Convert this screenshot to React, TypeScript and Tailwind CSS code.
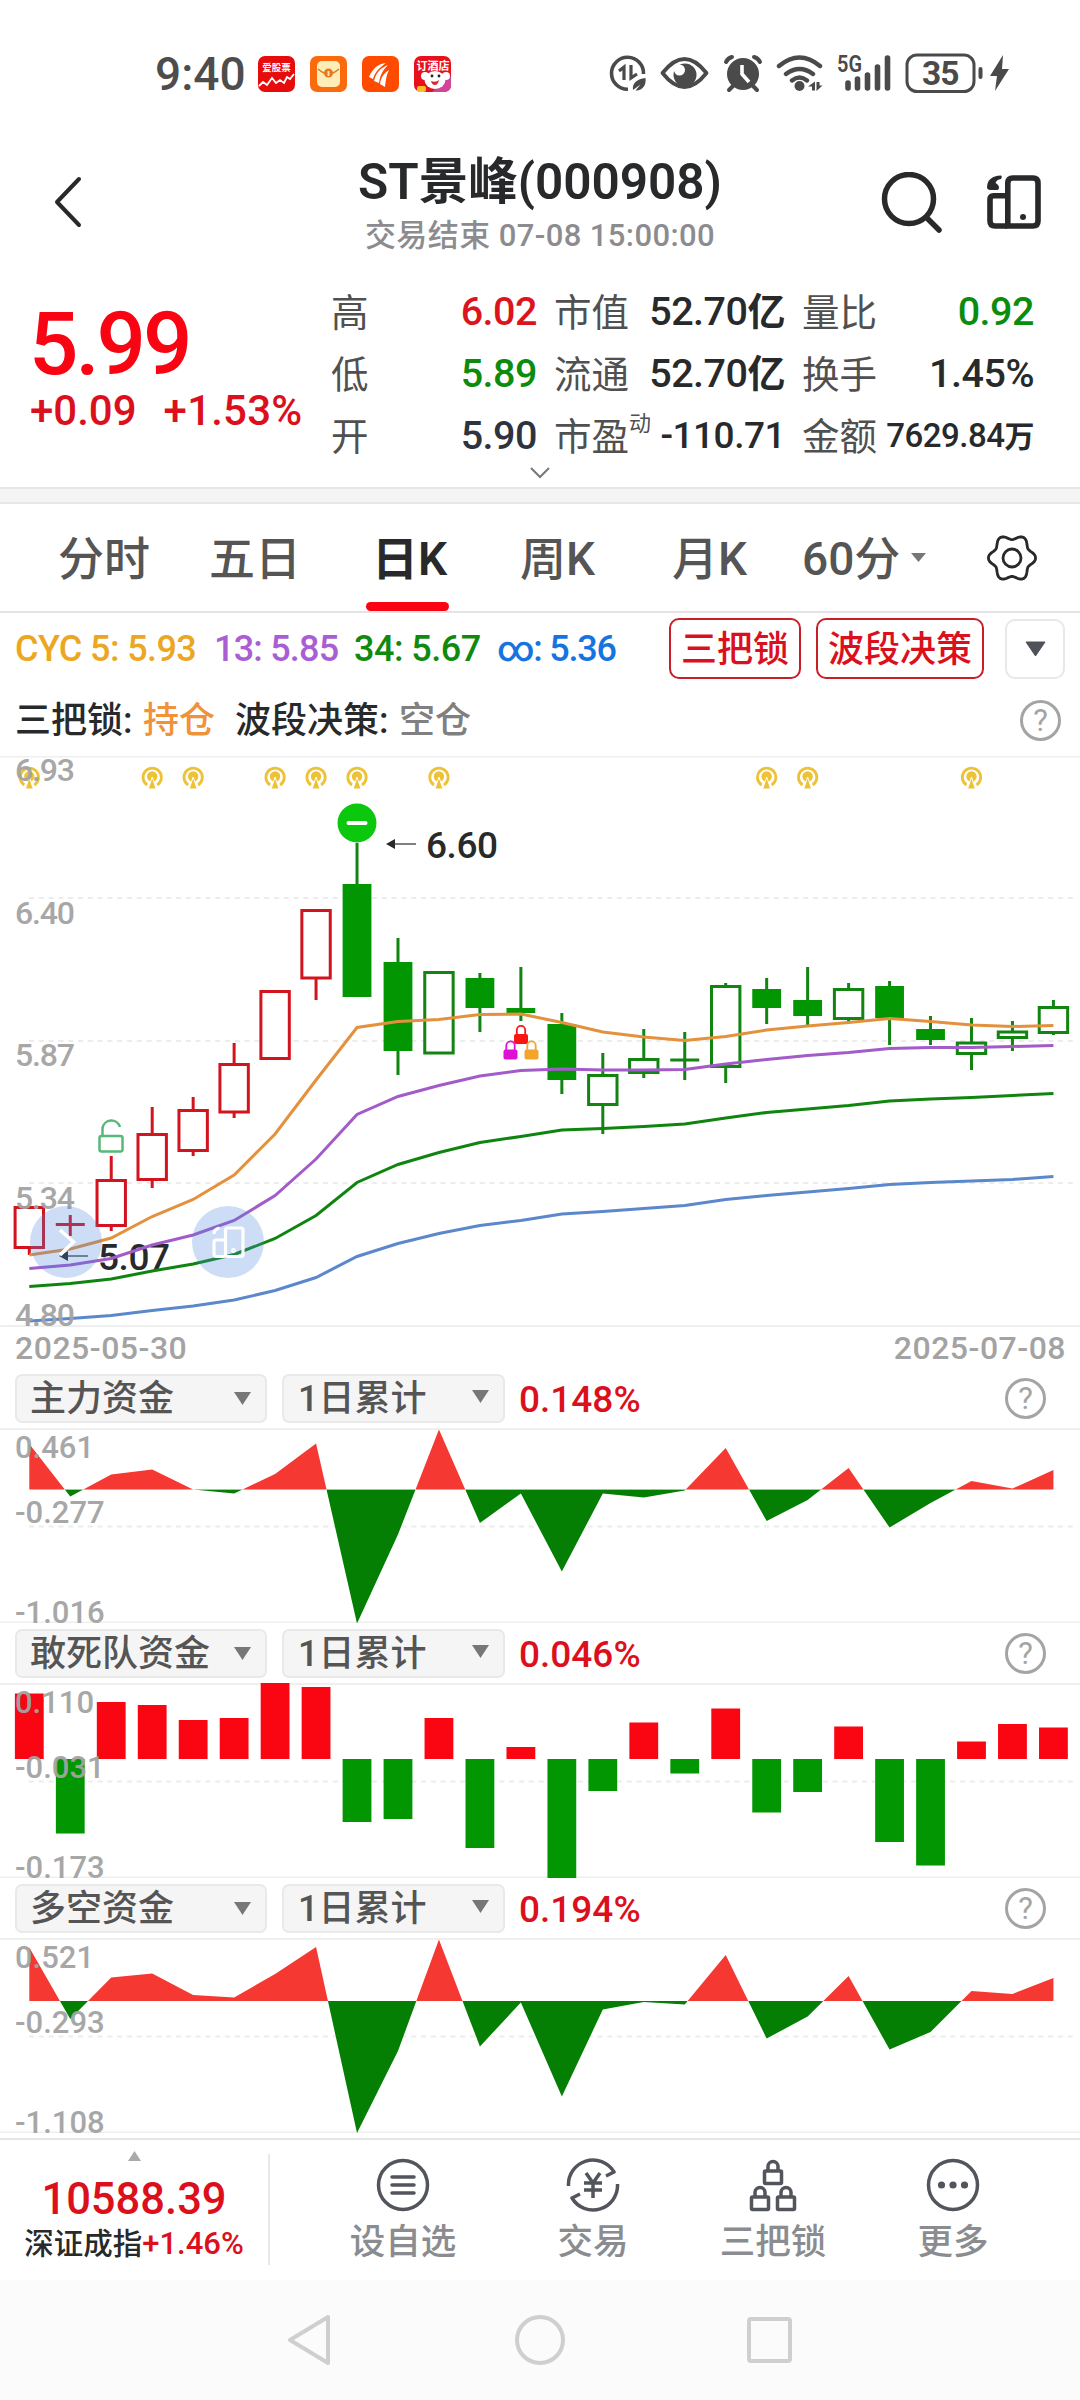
import type { ReactNode } from "react";

const STEP = 40.965;
const X0 = 29.3;
const px = (i: number) => X0 + i * STEP;

type Candle = { kind: "up" | "hollow" | "solid"; body: [number, number]; wick: [number, number] };

// y values inside the k-line canvas (570px high)
const TOP = 756;
const candles: Candle[] = [
  { kind: "up", body: [1206, 1249], wick: [1206, 1255] },
  { kind: "up", body: [1224.5, 1224.5], wick: [1215, 1236] },
  { kind: "up", body: [1179, 1227], wick: [1156, 1231] },
  { kind: "up", body: [1133, 1181], wick: [1107, 1188] },
  { kind: "up", body: [1109, 1152], wick: [1097, 1156] },
  { kind: "up", body: [1063, 1113.5], wick: [1043, 1118] },
  { kind: "up", body: [990, 1060], wick: [990, 1060] },
  { kind: "up", body: [909, 979.5], wick: [909, 1000] },
  { kind: "solid", body: [884, 997], wick: [843, 997] },
  { kind: "solid", body: [962, 1051], wick: [938, 1075] },
  { kind: "hollow", body: [971, 1054.5], wick: [971, 1054] },
  { kind: "solid", body: [978, 1008], wick: [973, 1032] },
  { kind: "solid", body: [1008, 1013], wick: [967, 1021] },
  { kind: "solid", body: [1024, 1080], wick: [1013, 1094] },
  { kind: "hollow", body: [1074, 1106], wick: [1053, 1134] },
  { kind: "hollow", body: [1058, 1074], wick: [1029, 1078] },
  { kind: "hollow", body: [1060, 1060], wick: [1032, 1080] },
  { kind: "hollow", body: [985, 1068], wick: [983, 1083] },
  { kind: "solid", body: [989, 1008], wick: [978, 1024] },
  { kind: "solid", body: [1000, 1016], wick: [967, 1026] },
  { kind: "hollow", body: [988, 1020], wick: [983, 1023] },
  { kind: "solid", body: [986, 1018], wick: [981, 1045] },
  { kind: "solid", body: [1029, 1040], wick: [1016, 1045] },
  { kind: "hollow", body: [1041.5, 1055], wick: [1018, 1070] },
  { kind: "hollow", body: [1030.5, 1039], wick: [1021, 1051] },
  { kind: "hollow", body: [1006, 1034], wick: [1000, 1035] },
];

const averages = [
  { color: "#5b87cb", ys: [1321, 1318.5, 1315.5, 1310.5, 1306, 1300, 1290.5, 1277.5, 1256.5, 1243.5, 1233.5, 1225.5, 1220.5, 1214, 1211.5, 1208.5, 1205.5, 1199.5, 1195.5, 1192, 1188.5, 1184.5, 1182.5, 1181, 1179.5, 1176.5] },
  { color: "#0f850f", ys: [1286.5, 1283.5, 1279, 1271, 1264, 1254.5, 1238.5, 1215.5, 1182.5, 1164.5, 1152.5, 1142.5, 1136.5, 1130, 1128.5, 1126.5, 1124, 1118, 1112.5, 1109, 1105.5, 1101, 1099, 1097.5, 1095.5, 1093.5] },
  { color: "#a25bc9", ys: [1268.5, 1265, 1258.5, 1245, 1235, 1220.5, 1195.5, 1159, 1114.5, 1096.5, 1085.5, 1076, 1070.5, 1069, 1070, 1070, 1069.5, 1064, 1059.5, 1055.5, 1052.5, 1048.5, 1047.5, 1047.5, 1046.5, 1045.5] },
  { color: "#e3913c", ys: [1255, 1249, 1238, 1216.5, 1199.5, 1175, 1134, 1080, 1027.5, 1021.5, 1019.5, 1014.5, 1014, 1022.5, 1032, 1037, 1040.5, 1036.5, 1030, 1026, 1022.5, 1018.5, 1021.5, 1025, 1026.5, 1025.5] },
];

const signals = [0, 3, 4, 6, 7, 8, 10, 18, 19, 23];

const mainFund = [-45.5, 7, -15, -20, 0, 4, -15.5, -46, 134, 45, -60, 33.5, 4, 82, 4, 8, 1, -41.5, 31.5, 10.5, -21.5, 38, 13.5, -8.5, -1, -19.5];
const hotFund = [-65.5, 74.5, -57, -54, -39, -41, -76, -72, 63, 60, -41, 89, -12, 119, 32, -36.5, 14.5, -50.5, 53.5, 33, -32.5, 83, 106.5, -17.5, -35, -31.5];
const netFund = [-53.5, 18, -23.5, -27.5, -6, -3.5, -27, -54, 132, 50, -61.5, 45.5, 1.5, 95.5, 8.5, 1, 3.5, -46, 37.5, 15.5, -25, 48.5, 31, -10, -7, -23];

const gear = Array.from({ length: 72 }, (_, i) => {
  const a = (i * Math.PI) / 36;
  const r = 21 + 2.6 * Math.cos(6 * a);
  return `${i ? "L" : "M"}${(25 + r * Math.cos(a)).toFixed(1)} ${(25 + r * Math.sin(a)).toFixed(1)}`;
}).join("") + "Z";

function StatusBar() {
  return (
    <div className="flex h-[110px] items-center pt-[37px] pl-[155px]">
      <span className="w-[103px] text-[46px] leading-[38px] text-[#4d4d4d]">9:40</span>
      <svg className="h-[38px] w-[200px]" viewBox="0 0 200 38">
        <rect y="1" width="37" height="36" rx="7" fill="#e60c0c" />
        <text x="18.5" y="16" fontSize="9.5" fontWeight="700" textAnchor="middle" fill="#fff">爱股票</text>
        <path d="M1 31 5 27l4 3 5-7 4 5 4-3 4 3 3-6 3 2 4-5" fill="none" stroke="#fff" strokeWidth="1.8" />
        <rect x="52" y="1" width="37" height="36" rx="7" fill="#fb6a0c" />
        <rect x="59" y="6" width="23" height="26" rx="5" fill="#ffedb8" />
        <path d="M60 14q6 5 10.500 5t10.500-5" fill="none" stroke="#e0781c" strokeWidth="1.600" />
        <circle cx="70.500" cy="18" r="4.500" fill="#e8791b" />
        <path d="M70.500 16v5" stroke="#ffedb8" strokeWidth="1.800" />
        <rect x="104" y="1" width="37" height="36" rx="7" fill="#fe4b00" />
        <path d="M111 22c4-9 9-13 17-14-7 5-11 9-13 16zM116 26c2-8 6-13 14-16-5 5-8 10-9 18zM122 29c1-7 4-11 9-14-3 6-3 10-4 17z" fill="#fff" />
        <rect x="156" y="1" width="37" height="36" rx="7" fill="#e8101c" />
        <path d="M174 37l19-16v9q0 7-7 7z" fill="#d0449a" />
        <text x="175" y="15" fontSize="11" fontWeight="700" textAnchor="middle" fill="#fff">订酒店</text>
        <ellipse cx="177" cy="25" rx="10.500" ry="9" fill="#fff" />
        <circle cx="167" cy="21" r="4" fill="#fff" />
        <circle cx="188" cy="21" r="4" fill="#fff" />
        <circle cx="174" cy="21" r="1.400" fill="#222" />
        <circle cx="181" cy="21" r="1.400" fill="#222" />
        <path d="M173 26q5 2 8-1-1 5-4 5t-4-4z" fill="#e02530" />
        <rect x="159" y="31" width="9" height="6" rx="2" fill="#fbbd23" />
      </svg>
      <svg className="ml-[146px] h-[44px] w-[420px]" viewBox="604 52 420 44" fill="none" stroke="#4a4a4a">
        {/* data saver */}
        <path d="M628 89.300A16 16 0 1 1 643.500 74" strokeWidth="3.600" />
        <path d="M619 71l5-4v13M631 65v13l6-4" strokeWidth="3.200" />
        <path d="M633 90c-1-7 4-11 12.500-12 1 7-3 13-10 12.500l5-6z" fill="#4a4a4a" stroke="none" />
        {/* eye */}
        <path d="M662.500 73q11-14 22-14t22 14q-11 14-22 14t-22-14z" strokeWidth="3.800" strokeLinejoin="round" />
        <circle cx="685" cy="75" r="11.500" fill="#4a4a4a" stroke="none" />
        <circle cx="679.500" cy="70" r="5.500" fill="#fff" stroke="none" />
        {/* alarm */}
        <circle cx="743" cy="74" r="16" fill="#4a4a4a" stroke="none" />
        <path d="M742 65v9l7 8" stroke="#fff" strokeWidth="3.600" />
        <path d="M726 62q2-4 6-5M760 62q-2-4-6-5M733 86l-4 4M753 86l4 4" strokeWidth="4" strokeLinecap="round" />
        {/* wifi */}
        <path d="M779 66q20.500-17 41 0M786 74q13.500-10 27 0M792 80.500q7.500-6 15 0" strokeWidth="4.400" strokeLinecap="round" />
        <circle cx="799.500" cy="86" r="5" fill="#4a4a4a" stroke="none" />
        <path d="M808 86.500l7-5v9h-3v-4zM816.500 82v9l6-5.500h-3V82z" fill="#4a4a4a" stroke="none" />
        {/* signal */}
        <path d="M848 88v-5M857.500 88v-9M867.500 88v-13M877.500 88v-21M887.500 88v-30" strokeWidth="5.600" strokeLinecap="round" />
        <text x="837" y="72" fontSize="23" fontWeight="600" fill="#4a4a4a" stroke="none" textLength="25" lengthAdjust="spacingAndGlyphs">5G</text>
        {/* battery */}
        <rect x="907" y="55" width="67" height="36.500" rx="10" strokeWidth="3" />
        <path d="M980.500 69v8" strokeWidth="4" strokeLinecap="round" />
        <text x="922" y="85" fontSize="33.500" fontWeight="700" fill="#4a4a4a" stroke="none" textLength="37.500">35</text>
        <path d="M1003 55l-13 21h7l-2 15 14-22h-7z" fill="#4a4a4a" stroke="none" />
      </svg>
    </div>
  );
}

function DeviceIcon({ className }: { className: string }) {
  return (
    <svg className={className} viewBox="0 0 54 54" fill="none" stroke="currentColor" strokeWidth="5.600">
      <path d="M20.800 8q0-5 5-5h20.200q5 0 5 5v38q0 5-5 5H20.800z" />
      <path d="M20 20.800H6.500q-3.500 0-3.500 4V46q0 5 5 5H20" />
      <path d="M14 .5Q0 1 0 13q1 2 3 2h7q2 0 2-2.500T8.500 8q1-3.500 5.500-4 1.500-3 0-3.500z" fill="currentColor" stroke="none" />
      <circle cx="36" cy="42" r="3" fill="currentColor" stroke="none" />
    </svg>
  );
}

function Header() {
  return (
    <header className="flex h-[150px] items-start pl-[54px]">
      <svg className="mt-[66px] h-[52px] w-[28px]" viewBox="0 0 28 52" fill="none" stroke="#28292b" strokeWidth="4" strokeLinecap="round" strokeLinejoin="round">
        <path d="M25 3 3 26l22 23" />
      </svg>
      <div className="ml-[136px] flex w-[644px] flex-col items-center pt-[47px]">
        <h1 className="text-[49.500px] leading-[50px] font-semibold whitespace-nowrap text-[#28292b]">ST景峰(000908)</h1>
        <p className="mt-[11px] text-[31px] leading-[36px] tracking-[0.4px] whitespace-nowrap text-[#8c8c90]">交易结束 07-08 15:00:00</p>
      </div>
      <div className="ml-[19px] flex items-start gap-[44px]">
        <svg className="mt-[62px] h-[62px] w-[62px]" viewBox="0 0 62 62" fill="none" stroke="#28292b" strokeWidth="5.500" strokeLinecap="round">
          <circle cx="28" cy="27" r="24.500" />
          <path d="M46 46l12 12" />
        </svg>
        <DeviceIcon className="mt-[65px] h-[54px] w-[54px] text-[#28292b]" />
      </div>
    </header>
  );
}

function Stat({ label, sup, value, tone = "text-[#28292b]", size = "text-[39.500px]" }: { label: string; sup?: string; value: ReactNode; tone?: string; size?: string }) {
  return (
    <div className="flex h-[62px] items-center justify-between whitespace-nowrap">
      <span className="-ml-px flex pt-[2px] text-[37.500px] leading-[62px] font-normal text-[#505050]">
        {label}
        {sup && <sup className="top-0 mt-[-13px] text-[22px] leading-[62px]">{sup}</sup>}
      </span>
      <span className={`leading-[62px] tracking-[-0.5px] ${size} ${tone}`}>{value}</span>
    </div>
  );
}

function Quote() {
  return (
    <section className="relative flex h-[227px] pl-[31px]">
      <div className="w-[301px] pt-[36px] whitespace-nowrap">
        <div className="-ml-[2px] text-[87px] leading-[96px] tracking-[-3px] text-[#f80412]">5.99</div>
        <div className="-ml-px flex gap-[27px] text-[42px] leading-[38px] text-[#db101c]">
          <span>+0.09</span>
          <span className="tracking-[0.2px]">+1.53%</span>
        </div>
      </div>
      <div className="grid h-[186px] grid-cols-[205px_230px_231px] gap-x-[18px] pt-[21px]">
        <Stat label="高" value="6.02" tone="text-[#dc1420]" />
        <Stat label="市值" value={<>52.70<span className="text-[38px] font-bold">亿</span></>} />
        <Stat label="量比" value="0.92" tone="text-[#0c8c0c]" />
        <Stat label="低" value="5.89" tone="text-[#0c8c0c]" />
        <Stat label="流通" value={<>52.70<span className="text-[38px] font-bold">亿</span></>} />
        <Stat label="换手" value="1.45%" />
        <Stat label="开" value="5.90" tone="text-[#2d3440]" />
        <Stat label="市盈" sup="动" value="-110.71" size="text-[37px]" />
        <Stat label="金额" value={<>7629.84<span className="text-[30px] font-bold">万</span></>} size="text-[33px]" />
      </div>
      <svg className="absolute top-[206px] left-[529px] h-[13px] w-[22px]" viewBox="0 0 22 13" fill="none" stroke="#777" strokeWidth="2">
        <path d="M2 2l9 9 9-9" />
      </svg>
    </section>
  );
}

function Tabs() {
  return (
    <nav className="flex h-[109px] items-center border-b-2 border-[#e4e4e4] pl-[58px] text-[46px] leading-[110px] whitespace-nowrap text-[#555]">
      <span className="w-[151px] pt-[3px]">分时</span>
      <span className="w-[163px] pt-[3px]">五日</span>
      <span className="relative w-[148px] pt-[3px] font-semibold text-[#28292b]">
        日K
        <i className="absolute bottom-[3px] left-[-6px] h-[9px] w-[83px] rounded-full bg-[#f80412]" />
      </span>
      <span className="w-[152px] pt-[3px]">周K</span>
      <span className="w-[130px] pt-[3px]">月K</span>
      <span className="w-[109px] pt-[3px]">60分</span>
      <svg className="h-[9px] w-[15px]" viewBox="0 0 15 9"><path d="M0 0h15L7.500 9z" fill="#777" /></svg>
      <svg className="ml-[61px] h-[50px] w-[50px]" viewBox="0 0 50 50" fill="none" stroke="#28292b" strokeWidth="2.800" strokeLinejoin="round">
        <path d={gear} />
        <circle cx="25" cy="25" r="9" />
      </svg>
    </nav>
  );
}

function Help({ className }: { className: string }) {
  return (
    <span className={`flex h-[41px] w-[41px] items-center justify-center rounded-full border-3 border-[#a4a4a4] text-[31px] leading-none font-normal text-[#a4a4a4] ${className}`}>?</span>
  );
}

function Indicators() {
  return (
    <div className="h-[143px] text-[36px] whitespace-nowrap">
      <div className="flex h-[71px] items-center pl-[15px] leading-[71px]">
        <span className="w-[199px] pt-[2px] tracking-[-0.6px] text-[#eca722]">CYC 5: 5.93</span>
        <span className="w-[140px] pt-[2px] tracking-[-0.8px] text-[#a95fd3]">13: 5.85</span>
        <span className="w-[143px] pt-[2px] tracking-[-0.5px] text-[#0f8a0f]">34: 5.67</span>
        <span className="w-[172px] pt-[2px] tracking-[-1.200px] text-[#1674e0]">∞: 5.36</span>
        <span className="flex h-[61px] w-[132px] items-center justify-center rounded-[10px] border-2 border-[#c81e28] pt-[3px] text-[#dc101c]">三把锁</span>
        <span className="ml-[15px] flex h-[61px] w-[168px] items-center justify-center rounded-[10px] border-2 border-[#c81e28] pt-[3px] text-[#dc101c]">波段决策</span>
        <span className="ml-[21px] flex h-[60px] w-[60px] items-center justify-center rounded-[10px] border-2 border-[#e8e8ea]">
          <svg className="h-[16px] w-[21px]" viewBox="0 0 21 16"><path d="M1 1h19L10.500 15z" fill="#50525a" stroke="#50525a" strokeLinejoin="round" /></svg>
        </span>
      </div>
      <div className="flex h-[72px] items-center pl-[15px] leading-[72px]">
        <span className="w-[128px] pt-[1px] text-[#28292b]">三把锁:</span>
        <span className="w-[92px] pt-[1px] text-[#f0923a]">持仓</span>
        <span className="w-[164px] pt-[1px] text-[#28292b]">波段决策:</span>
        <span className="pt-[1px] text-[#808080]">空仓</span>
        <Help className="mr-[19px] ml-auto" />
      </div>
    </div>
  );
}

function Padlock({ x, y, color }: { x: number; y: number; color: string }) {
  return (
    <g transform={`translate(${x} ${y})`}>
      <path d="M-4.200 10V5a4.200 4.200 0 0 1 8.400 0v5" fill="none" stroke={color} strokeWidth="1.800" />
      <rect x="-7" y="9" width="14" height="10" rx="2" fill={color} />
    </g>
  );
}

function KLine() {
  const labels: [string, number][] = [["6.93", 781], ["6.40", 924], ["5.87", 1066], ["5.34", 1209], ["4.80", 1325.5]];
  return (
    <svg className="block h-[571px] w-full" viewBox={`0 ${TOP} 1080 571`} fill="none">
      <path d="M0 756.500h1080M0 1326h1080" stroke="#efefef" strokeWidth="2" />
      <path d="M29 898h1046M29 1041h1046M29 1183h1046" stroke="#ececec" strokeWidth="2" strokeDasharray="5 4.800" />
      {signals.map((i) => (
        <g key={i} transform={`translate(${px(i)} 777)`} stroke="#eec236">
          <path d="M-5 8a9.200 9.200 0 1 1 10 0" strokeWidth="2.800" />
          <circle cy="-.5" r="4.200" fill="#eec236" strokeWidth="2" />
          <path d="M0 0-4 12H4Z" fill="#eec236" stroke="#fff" strokeWidth="1" />
        </g>
      ))}
      {candles.map(({ kind, body, wick }, i) => {
        const color = kind === "up" ? "#d3141f" : "#128412";
        const x = px(i);
        const flat = body[0] === body[1];
        return (
          <g key={i} stroke={color} strokeWidth="3">
            <path d={`M${x} ${wick[0]}V${wick[1]}`} />
            {flat ? (
              <path d={`M${x - 14.5} ${body[0]}h29`} />
            ) : kind === "solid" ? (
              <rect x={x - 14.4} y={body[0]} width="28.800" height={body[1] - body[0]} fill="#029702" stroke="none" />
            ) : (
              <rect x={x - 14.2} y={body[0] + 1.5} width="28.400" height={body[1] - body[0] - 3} fill="#fff" />
            )}
          </g>
        );
      })}
      <g fill="#28292b" fontSize="37">
        <path d="M386 844l9-5v10z" />
        <path d="M395 844h21M68 1256h20" stroke="#555" strokeWidth="1.500" />
        <path d="M59 1256l9-5v10z" />
        <text x="426" y="858" textLength="72">6.60</text>
        <text x="98" y="1270" textLength="72">5.07</text>
      </g>
      {averages.map(({ color, ys }) => (
        <polyline key={color} points={ys.map((y, i) => `${px(i)},${y}`).join(" ")} stroke={color} strokeWidth="3" />
      ))}
      <circle cx="357" cy="823" r="19.500" fill="#0bc80f" />
      <path d="M348.500 823h17" stroke="#fff" strokeWidth="4" strokeLinecap="round" />
      <Padlock x={521} y={1025} color="#fb1414" />
      <Padlock x={510.5} y={1040.5} color="#dc14d2" />
      <Padlock x={531.5} y={1040.5} color="#f3a42a" />
      <g stroke="#58b878" strokeWidth="2.500">
        <rect x="99.500" y="1136" width="23" height="15.500" rx="2" />
        <path d="M102.500 1136v-8a9 9 0 0 1 17.500-1" />
      </g>
      <g fill="#a3a3a3" fontSize="32">
        {labels.map(([t, y]) => <text key={t} x="15" y={y} textLength="60" opacity=".95">{t}</text>)}
      </g>
      <circle cx="66" cy="1242" r="36" fill="#4c86e0" fillOpacity=".28" />
      <path d="M60 1230l13.500 12L60 1255" stroke="#fff" strokeWidth="3.500" />
      <circle cx="228" cy="1242" r="36" fill="#4c86e0" fillOpacity=".28" />
      <g stroke="#fff" strokeWidth="3.200" strokeLinejoin="round">
        <rect x="225.500" y="1228" width="17.500" height="28.500" rx="2" />
        <path d="M225.500 1240h-9q-2.500 0-2.500 2.500v11.500q0 2.500 2.500 2.500h9M214 1234q0-5 5.500-6" />
        <circle cx="233.500" cy="1250.500" r=".8" />
      </g>
    </svg>
  );
}

function FundPanel({ name, value, labels, data, zero, bars = false }: { name: string; value: string; labels: string[]; data: number[]; zero: number; bars?: boolean }) {
  const area = `${X0},${zero} ${data.map((v, i) => `${px(i)},${zero + v}`).join(" ")} ${px(25)},${zero}`;
  return (
    <section className="h-[255px] whitespace-nowrap">
      <div className="flex h-[60px] items-center pl-[15px] text-[36px]">
        <span className="flex h-[49px] w-[252px] items-center justify-between rounded-[7px] border-2 border-[#e9e9e9] bg-[#f5f5f5] pr-[14px] pl-[13px] leading-[45px] text-[#555]">
          <span className="pt-[3px]">{name}</span>
          <svg className="h-[13px] w-[17px]" viewBox="0 0 17 13"><path d="M0 0h17L8.500 13z" fill="#777" /></svg>
        </span>
        <span className="ml-[15px] flex h-[49px] w-[223px] items-center justify-between rounded-[7px] border-2 border-[#e9e9e9] bg-[#f5f5f5] pr-[14px] pl-[14px] leading-[45px] text-[#555]">
          <span className="pt-[3px]">1日累计</span>
          <svg className="mb-[3px] h-[13px] w-[17px]" viewBox="0 0 17 13"><path d="M0 0h17L8.500 13z" fill="#777" /></svg>
        </span>
        <span className="ml-[14px] pt-[2px] text-[37px] leading-[49px] text-[#dc101c]">{value}</span>
        <Help className="mr-[34px] ml-auto" />
      </div>
      <svg className="block h-[195px] w-full" viewBox="0 0 1080 195">
        <defs>
          <clipPath id={`over-${zero}`}><rect width="1080" height={zero} /></clipPath>
          <clipPath id={`under-${zero}`}><rect y={zero} width="1080" height="195" /></clipPath>
        </defs>
        <path d="M0 1h1080" stroke="#efefef" strokeWidth="2" />
        <path d="M0 195h1080" stroke="#efefef" strokeWidth="3" />
        <path d="M29 98.500h1046" stroke="#ececec" strokeWidth="2" strokeDasharray="5 4.800" />
        {bars ? (
          data.map((v, i) => (
            <rect key={i} x={px(i) - 14.4} y={v < 0 ? zero + v : zero} width="28.800" height={Math.abs(v)} fill={v < 0 ? "#fa0512" : "#029702"} />
          ))
        ) : (
          <>
            <polygon points={area} fill="#f63832" clipPath={`url(#over-${zero})`} />
            <polygon points={area} fill="#047f04" clipPath={`url(#under-${zero})`} />
          </>
        )}
        <g fill="#a3a3a3" fontSize="31" opacity=".95">
          <text x="15" y="30">{labels[0]}</text>
          <text x="15" y="95">{labels[1]}</text>
          <text x="15" y="194.500">{labels[2]}</text>
        </g>
      </svg>
    </section>
  );
}

function Lock({ x, y }: { x: number; y: number }) {
  return (
    <g transform={`translate(${x} ${y})`}>
      <rect x="1.500" y="11" width="17" height="12.500" rx="1" />
      <path d="M5 11V6.500a5 5 0 0 1 10 0V11" />
    </g>
  );
}

function Action({ label, children }: { label: string; children: ReactNode }) {
  return (
    <div className="flex w-[180px] flex-col items-center pt-[18px]">
      <svg className="h-[54px] w-[54px]" viewBox="0 0 54 54" fill="none" stroke="#53555c" strokeWidth="3.500">{children}</svg>
      <span className="mt-[10px] text-[35.500px] leading-[40px] text-[#8a8c90]">{label}</span>
    </div>
  );
}

function BottomBar() {
  return (
    <footer className="flex h-[142px] border-t-2 border-[#e6e6e6] whitespace-nowrap">
      <div className="flex w-[268px] flex-col items-center">
        <svg className="mt-[11px] h-[10px] w-[13px]" viewBox="0 0 13 10"><path d="M6.500 0 13 10H0z" fill="#aaa" /></svg>
        <div className="mt-[17px] text-[43.500px] leading-[44px] text-[#dc101c]">10588.39</div>
        <div className="mt-[5px] flex text-[29.500px] leading-[34px] text-[#28292b]">深证成指<span className="text-[31px] text-[#dc101c]">+1.46%</span></div>
      </div>
      <i className="mt-[14px] h-[111px] w-[2px] bg-[#e8e8e8]" />
      <div className="ml-[43px] flex">
        <Action label="设自选">
          <circle cx="27" cy="27" r="24.500" />
          <path d="M16 19h22M16 27h22M16 35h22" strokeLinecap="round" />
        </Action>
        <div className="ml-[10px]">
          <Action label="交易">
            <path d="M2.500 28A24.500 24.500 0 0 1 48 14l-8 4M51.500 26A24.500 24.500 0 0 1 6 40l8-4" strokeLinejoin="round" />
            <path d="M20 15l7 10 7-10M18 25h18M18 32h18M27 25v15" />
          </Action>
        </div>
        <Action label="三把锁">
          <Lock x={17} y={2} />
          <Lock x={4} y={28} />
          <Lock x={30} y={28} />
        </Action>
        <Action label="更多">
          <circle cx="27" cy="27" r="24.500" />
          <g fill="#53555c" stroke="none">
            <circle cx="15.500" cy="27" r="3.600" />
            <circle cx="27" cy="27" r="3.600" />
            <circle cx="38.500" cy="27" r="3.600" />
          </g>
        </Action>
      </div>
    </footer>
  );
}

function SystemNav() {
  return (
    <div className="flex h-[120px] items-center bg-[#fbfbfb] pl-[286px]">
      <svg className="h-[52px] w-[508px]" viewBox="0 0 508 52" fill="none" stroke="#cfcfcf" strokeWidth="4" strokeLinejoin="round">
        <path d="M42 3v46L4 26z" />
        <circle cx="254" cy="26" r="23" />
        <rect x="463" y="5" width="41" height="42" rx="2" />
      </svg>
    </div>
  );
}

export default function App() {
  return (
    <main className="h-[2400px] w-[1080px] overflow-hidden bg-white font-[Roboto,'Noto_Sans_CJK_SC',sans-serif] font-medium">
      <StatusBar />
      <Header />
      <Quote />
      <div className="h-[17px] border-y-2 border-[#e6e6e6] bg-[#f4f4f4]" />
      <Tabs />
      <Indicators />
      <KLine />
      <div className="flex h-[41px] items-center justify-between pt-[2px] pr-[14px] pl-[15px] text-[32px] leading-[39px] tracking-[0.5px] text-[#a3a3a3]">
        <span>2025-05-30</span>
        <span>2025-07-08</span>
      </div>
      <FundPanel name="主力资金" value="0.148%" labels={["0.461", "-0.277", "-1.016"]} data={mainFund} zero={61.5} />
      <FundPanel name="敢死队资金" value="0.046%" labels={["0.110", "-0.031", "-0.173"]} data={hotFund} zero={76} bars />
      <FundPanel name="多空资金" value="0.194%" labels={["0.521", "-0.293", "-1.108"]} data={netFund} zero={63} />
      <div className="h-[5px]" />
      <BottomBar />
      <SystemNav />
    </main>
  );
}
